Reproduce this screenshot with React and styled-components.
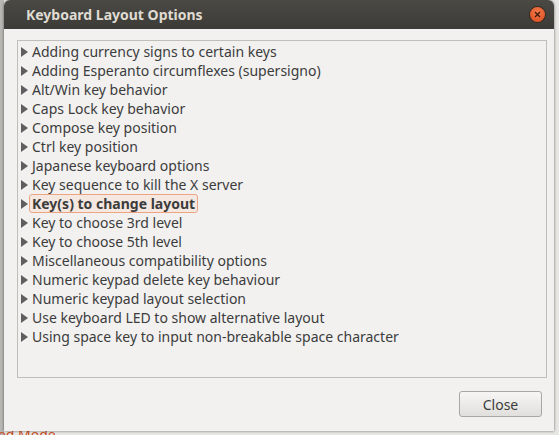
import React from 'react';
import styled, { createGlobalStyle } from 'styled-components';

const GlobalStyle = createGlobalStyle`
  html, body {
    margin: 0;
    padding: 0;
    width: 559px;
    height: 435px;
    overflow: hidden;
    background: #cfcdc9;
    font-family: "Noto Sans", "DejaVu Sans", sans-serif;
  }
`;

const Desktop = styled.div`
  position: relative;
  width: 559px;
  height: 435px;
  background: #e9e7e3;
  border-left: 4px solid #b9b7b3;
  box-sizing: border-box;
`;

const BackLabel = styled.span`
  position: absolute;
  left: -54px;
  top: 425px;
  font-size: 14px;
  color: #c8501e;
`;

const Window = styled.div`
  position: absolute;
  left: 0;
  top: 0;
  width: 550px;
  height: 431px;
  display: flex;
  flex-direction: column;
  background: #f2f1f0;
  border-radius: 6px 6px 0 0;
  box-shadow: 0 0 3px rgba(0, 0, 0, 0.55);
  overflow: hidden;
`;

const TitleBar = styled.div`
  height: 29px;
  flex: none;
  display: flex;
  align-items: center;
  justify-content: space-between;
  padding: 0 9px 0 22px;
  background: linear-gradient(#4a4944, #3c3b37);
`;

const Title = styled.span`
  font-size: 14px;
  font-weight: bold;
  color: #dfdbd2;
`;

const CloseDot = styled.span`
  width: 15px;
  height: 15px;
  border-radius: 50%;
  background: radial-gradient(circle at 50% 35%, #f47a4a, #d9491b);
  box-shadow: 0 0 0 1px #3a2a22;
  display: flex;
  align-items: center;
  justify-content: center;
`;

const Body = styled.div`
  flex: 1;
  display: flex;
  flex-direction: column;
  padding: 11px 7px 14px 13px;
`;

const ListFrame = styled.div`
  height: 338px;
  flex: none;
  border: 1px solid #c0beb9;
  box-sizing: border-box;
  padding: 1px 0 0 3px;
`;

const Row = styled.div`
  height: 19px;
  display: flex;
  align-items: center;
  gap: 3px;
  font-size: 14px;
  color: #3c3c3c;
`;

const Arrow = styled.span`
  width: 0;
  height: 0;
  border-top: 5px solid transparent;
  border-bottom: 5px solid transparent;
  border-left: 7px solid #5f5f5f;
  flex: none;
`;

const Label = styled.span`
  line-height: 17px;
  padding: 0 2px;
  margin-left: -2px;
  border: 1px solid ${(p) => (p.selected ? '#eca483' : 'transparent')};
  border-radius: 3px;
  background: ${(p) => (p.selected ? '#f5e8e1' : 'transparent')};
  font-weight: ${(p) => (p.selected ? 'bold' : 'normal')};
`;

const Footer = styled.div`
  flex: 1;
  display: flex;
  justify-content: flex-end;
  align-items: flex-end;
  padding-right: 5px;
`;

const Button = styled.button`
  width: 83px;
  height: 26px;
  border: 1px solid #a9a7a3;
  border-radius: 3px;
  background: linear-gradient(#f7f6f5, #e1dfdc);
  font-family: inherit;
  font-size: 14px;
  color: #3c3c3c;
  padding: 0;
`;

const items = [
  'Adding currency signs to certain keys',
  'Adding Esperanto circumflexes (supersigno)',
  'Alt/Win key behavior',
  'Caps Lock key behavior',
  'Compose key position',
  'Ctrl key position',
  'Japanese keyboard options',
  'Key sequence to kill the X server',
  'Key(s) to change layout',
  'Key to choose 3rd level',
  'Key to choose 5th level',
  'Miscellaneous compatibility options',
  'Numeric keypad delete key behaviour',
  'Numeric keypad layout selection',
  'Use keyboard LED to show alternative layout',
  'Using space key to input non-breakable space character',
];

export default function App() {
  return (
    <>
      <GlobalStyle />
      <Desktop>
        <BackLabel>Advanced Mode</BackLabel>
        <Window>
          <TitleBar>
            <Title>Keyboard Layout Options</Title>
            <CloseDot>
              <svg width="7" height="7" viewBox="0 0 7 7">
                <path d="M1 1L6 6M6 1L1 6" stroke="#3a1a0c" strokeWidth="1.3" />
              </svg>
            </CloseDot>
          </TitleBar>
          <Body>
            <ListFrame>
              {items.map((t) => (
                <Row key={t}>
                  <Arrow />
                  <Label selected={t === 'Key(s) to change layout'}>{t}</Label>
                </Row>
              ))}
            </ListFrame>
            <Footer>
              <Button>Close</Button>
            </Footer>
          </Body>
        </Window>
      </Desktop>
    </>
  );
}
